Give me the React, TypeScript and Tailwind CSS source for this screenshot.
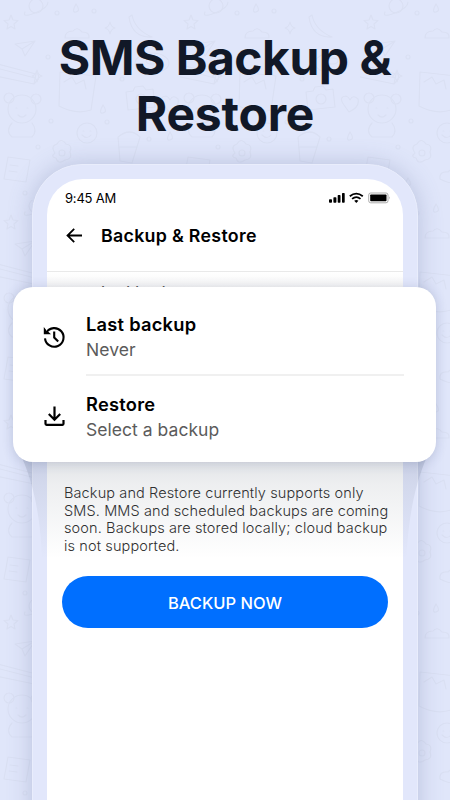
import React from 'react';

const DoodleBackground: React.FC = () => (
  <svg className="absolute inset-0 h-full w-full" aria-hidden="true">
    <defs>
      <pattern id="doodles" width="180" height="200" patternUnits="userSpaceOnUse">
        <g fill="none" stroke="#dae0f3" strokeWidth="1.200" strokeLinecap="round" strokeLinejoin="round">
          {/* stars */}
          <path d="M11 15l2 5 5 .5-4 3.500 1 5-4-2.500-4 2.500 1-5-4-3.500 5-.5z" />
          <path d="M110 22q1 5 5 6-4 1-5 6-1-5-5-6 4-1 5-6z" />
          <path d="M37 70q1 5 5 6-4 1-5 6-1-5-5-6 4-1 5-6z" />
          <path d="M163 172l2 4 5 .5-4 3 1 5-4-2.500-4 2.500 1-5-4-3 5-.5z" />
          {/* planet */}
          <circle cx="36" cy="6" r="7" />
          <path d="M25 12q-3 6 10 1t13-11" />
          {/* chilli, cloud */}
          <path d="M132 15q3 15 20 22-20 1-23-20zM65 38q0-7 8-7 4-5 9 1 8 0 7 6z" />
          {/* paper plane */}
          <path d="M15 44l20-3-10 15-3-7zM22 49l13-8" />
          {/* sandwich */}
          <path d="M-2 64l38 10-2 10-38-8zM0 69l35 9M36 72q6 5-2 12" />
          {/* mug */}
          <path d="M60 72l36 4-5 34q-15 5-32-4zM64 82l8-5 4 7 8-4 2 9" />
          {/* bear */}
          <circle cx="22" cy="109" r="14" />
          <circle cx="9" cy="98" r="5" />
          <circle cx="36" cy="99" r="5" />
          <path d="M16 108h1m10 0h1M18 115q4 4 8 0M12 123q-7 8 0 14h20q6-6 0-14" />
          {/* smiley */}
          <circle cx="87" cy="133" r="10" />
          <path d="M83 131h1m6 0h1m-9 4q5 5 9 0" />
          {/* donut */}
          <ellipse cx="152" cy="63" rx="17" ry="10" />
          <ellipse cx="152" cy="61" rx="6" ry="3" />
          {/* camera */}
          <path d="M126 92l7-1 2-4 8-1 3 4 7-1 2 18-27 3z" />
          <circle cx="141" cy="99" r="5" />
          {/* flower, rocket and drops */}
          <path d="M55 153q-5-7 2-9 4-7 9 0 7 1 4 8 3 7-5 8-7 5-9-2-6-1-1-5z" />
          <circle cx="62" cy="153" r="3" />
          <path d="M118 137q12-10 22 0l-8 26-12-2zM120 147h17M8 157l22 3-4 22-22-3zM10 165l8 1M9 171l8 1" />
          <path d="M48 178q5 7 0 8t0-8M103 105q5 7 0 8t0-8M76 4q5 7 0 8t0-8M170 132q5 7 0 8t0-8" />
          <path d="M80 179q-1-8 8-7 6-7 12 0 9 0 7 8-12 7-27-1z" />
          <path d="M164 105q-6-8 2-9 3 1 4 4 3-6 8-1 2 8-9 13z" />
          {/* dots */}
          <circle cx="57" cy="13" r="2" />
          <circle cx="94" cy="11" r="2" />
          <circle cx="48" cy="57" r="2" />
          <circle cx="114" cy="58" r="2" />
          <circle cx="122" cy="79" r="2" />
          <circle cx="51" cy="121" r="2" />
          <circle cx="107" cy="122" r="2" />
          <circle cx="149" cy="139" r="2" />
          <circle cx="38" cy="147" r="2" />
          <circle cx="120" cy="184" r="2" />
          <circle cx="144" cy="187" r="2" />
          <circle cx="25" cy="193" r="2" />
        </g>
      </pattern>
    </defs>
    <rect width="100%" height="100%" fill="url(#doodles)" />
  </svg>
);

const StatusIcons: React.FC = () => (
  <svg className="-mt-[2px] h-3 w-[62px]" viewBox="0 0 62 12" aria-hidden="true">
    <rect x="0" y="7.300" width="3" height="3.500" rx="0.800" />
    <rect x="4.400" y="5.200" width="3" height="5.600" rx="0.700" />
    <rect x="8.700" y="3" width="2.800" height="7.800" rx="0.700" />
    <rect x="13" y="1" width="2.700" height="9.800" rx="0.700" />
    <g fill="none" stroke="#000" strokeWidth="1.800">
      <path d="M20.800 4.300q6.500-5.300 13 0" />
      <path d="M23.100 6.900q4.200-3.500 8.400 0" />
    </g>
    <path d="M25.200 8.700q2.100-1.500 4.200 0l-2.100 2.200z" />
    <rect x="39.700" y="1" width="19.300" height="9.800" rx="2" fill="none" stroke="#999" strokeWidth="0.800" />
    <rect x="41.200" y="2.500" width="16.300" height="6.800" rx="0.800" />
    <path d="M60.300 4.300q1.200 1.600 0 3.200z" fill="#888" />
  </svg>
);

const HistoryIcon: React.FC = () => (
  <svg className="h-6 w-6" viewBox="0 0 24 24" fill="none" stroke="#000" strokeWidth="2.100" aria-hidden="true">
    <path d="M3 13.300A9.300 9.300 0 1 0 4.300 7.600" />
    <path d="M1.800 2v7.200H9L6.300 6.800 4.200 7 4 4.700z" fill="#000" stroke="none" />
    <path d="M12.200 6.500v6l4 4" />
  </svg>
);

const DownloadIcon: React.FC = () => (
  <svg className="mt-[1px] h-6 w-6" viewBox="0 0 24 24" fill="none" stroke="#000" strokeWidth="2.200" aria-hidden="true">
    <path d="M12.500 1.500v13M6.800 9l5.700 5.700L18.200 9" />
    <path d="M3.500 15v3.800q0 1 1 1h16q1 0 1-1V15" />
  </svg>
);

// Soft shade the floating card casts down over the phone
const CardShade: React.FC = () => (
  <svg className="absolute left-[13px] top-[440px] h-[130px] w-[423px]" viewBox="0 0 423 130" aria-hidden="true">
    <defs>
      <linearGradient id="shade" x1="0" y1="0" x2="0" y2="1">
        <stop offset="0.100" stopColor="#213055" stopOpacity="0.150" />
        <stop offset="0.350" stopColor="#213045" stopOpacity="0.080" />
        <stop offset="0.950" stopColor="#213045" stopOpacity="0" />
      </linearGradient>
    </defs>
    <path d="M0 0Q28 48 29 125H393Q396 43 423 0Z" fill="url(#shade)" />
  </svg>
);

interface BackupRowProps {
  icon: React.ReactNode;
  title: string;
  subtitle: string;
}

const BackupRow: React.FC<BackupRowProps> = ({ icon, title, subtitle }) => (
  <div className="flex items-center">
    <div className="flex w-[42px] shrink-0 justify-start pl-[1px]">{icon}</div>
    <div className="pl-[3px]">
      <h3 className="text-[18.300px] font-semibold leading-[26px] tracking-[0.240px] text-black">{title}</h3>
      <p className="text-[17.500px] leading-[25px] tracking-[0.040px] text-[#5b5b5b]">{subtitle}</p>
    </div>
  </div>
);

const App: React.FC = () => {
  return (
    <div className="relative h-[800px] w-[450px] overflow-hidden bg-[#e0e6fa] font-['Inter',sans-serif]">
      <DoodleBackground />

      <h1 className="relative pt-[30px] text-center text-[48px] font-bold leading-[56px] tracking-[-0.500px] text-[#111827]">
        SMS Backup &amp;
        <br />
        <span className="tracking-[-0.200px]">Restore</span>
      </h1>

      <div className="relative mx-auto mt-[22px] h-[680px] w-[386px] rounded-t-[50px] border border-[#e9edfc] bg-[#e2e7fb] px-[14px] pt-[14px] shadow-[0_0_24px_rgba(92,105,155,0.300)]">
        <div className="h-full overflow-hidden rounded-t-[36px] bg-white">
          <div className="flex h-[38px] items-center justify-between pl-[18px] pr-[12px] pt-[1px]">
            <span className="text-[13px] tracking-[-0.200px] text-black">9:45 AM</span>
            <StatusIcons />
          </div>
          <div className="flex h-[55px] items-start border-b border-[#e9e9e9] pl-[19px] pt-[6px]">
            <svg className="mt-[5px] h-4 w-4" viewBox="0 0 16 16" fill="none" stroke="#000" strokeWidth="1.800" aria-hidden="true">
              <path d="M16 7.500H1.500M8.200.8L1.500 7.500l6.700 6.700" />
            </svg>
            <h2 className="ml-[19px] text-[17.800px] font-semibold leading-[26px] tracking-[0.300px] text-black">Backup &amp; Restore</h2>
          </div>

          <div className="h-4 bg-linear-to-b from-white to-[#f5f5f5] pl-[54px] pt-[8px]">
            <p className="text-[15px] font-medium leading-6 text-[#555]">Last backup</p>
          </div>

          <p className="mt-[196px] whitespace-nowrap pl-[17px] text-[14.500px] font-light leading-[17.600px] tracking-[0.120px] text-[#303030]">
            Backup and Restore currently supports only
            <br />
            SMS. MMS and scheduled backups are coming
            <br />
            soon. Backups are stored locally; cloud backup
            <br />
            is not supported.
          </p>

          <button className="ml-[15px] mt-[22px] flex h-[52px] w-[326px] items-center justify-center rounded-full bg-[#006fff] pt-[2px] text-[16.500px] font-medium text-white">
            BACKUP NOW
          </button>
        </div>
      </div>

      <CardShade />

      {/* Enlarged settings card floating over the phone */}
      <div className="absolute left-[13px] top-[287px] h-[175px] w-[423px] rounded-[20px] bg-white pl-[28px] pr-[32px] pt-[24px] shadow-[0_1px_12px_rgba(50,65,110,0.200)]">
        <BackupRow icon={<HistoryIcon />} title="Last backup" subtitle="Never" />
        <div className="mb-[15px] ml-[45px] mt-[12px] h-[2px] bg-[#f0f0f0]" />
        <BackupRow icon={<DownloadIcon />} title="Restore" subtitle="Select a backup" />
      </div>
    </div>
  );
};

export default App;
